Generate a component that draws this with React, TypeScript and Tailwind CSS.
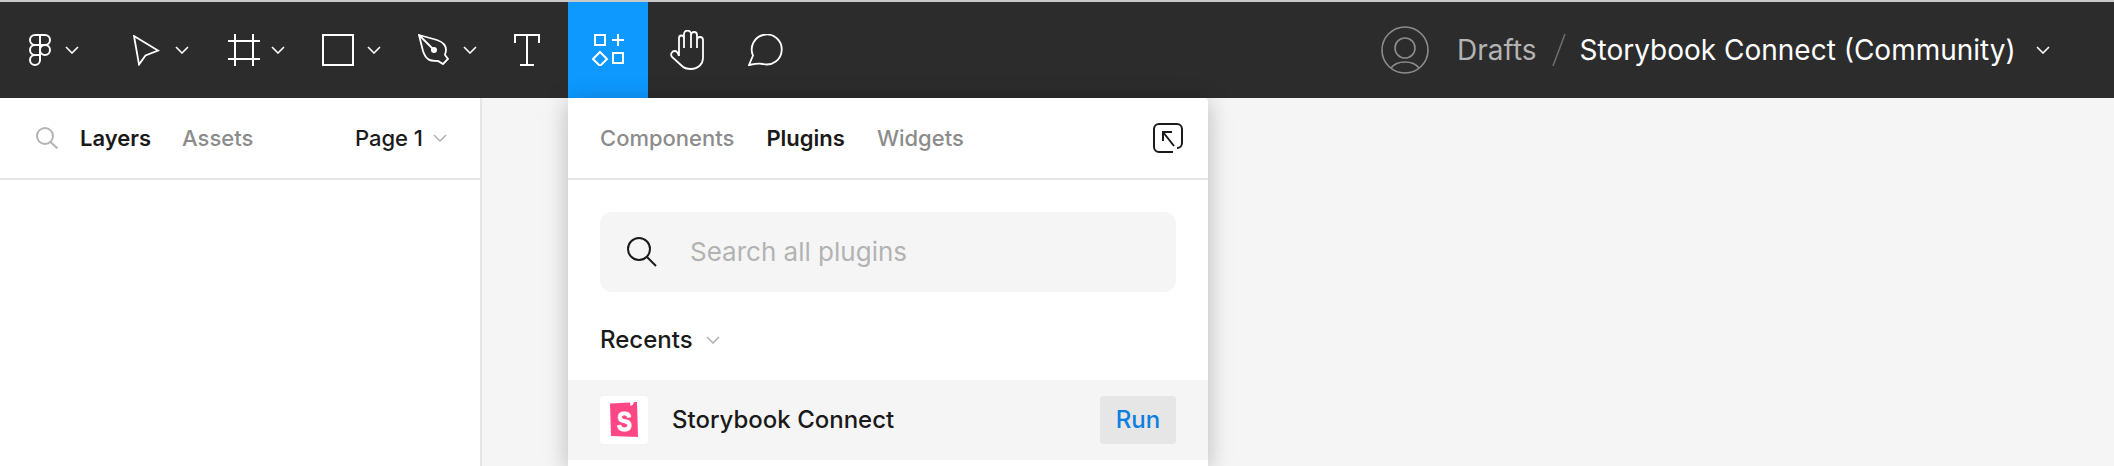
import { ReactNode } from "react";

const Chevron = ({ color = "#ffffff", className = "" }: { color?: string; className?: string }) => (
  <svg width="14" height="8" viewBox="0 0 14 8" fill="none" className={`shrink-0 ${className}`}>
    <path d="M1 1l6 6 6-6" stroke={color} strokeWidth="1.6" />
  </svg>
);

const Icon = ({ w, h, children, className = "" }: { w: number; h: number; children: ReactNode; className?: string }) => (
  <svg width={w} height={h} viewBox={`0 0 ${w} ${h}`} fill="none" stroke="#ffffff" strokeWidth="2" className={`shrink-0 ${className}`}>
    {children}
  </svg>
);

const Toolbar = () => (
  <div className="h-24 bg-[#2c2c2c] flex items-center shrink-0">
    <Icon w={22} h={32} className="ml-[29px]">
      <path d="M11 1H6a5 5 0 0 0 0 10h5zM11 1h5a5 5 0 0 1 0 10h-5zM11 11H6a5 5 0 0 0 0 10h5zM11 21H6a5 5 0 1 0 5 5zM16 11a5 5 0 1 1 0 10 5 5 0 0 1 0-10z" />
    </Icon>
    <Chevron className="ml-[14px]" />
    <Icon w={27} h={31} className="ml-[54px]">
      <path d="M1 1l24 14.500-12.500 5L6 29.500z" strokeWidth="1.8" />
    </Icon>
    <Chevron className="ml-[15px]" />
    <Icon w={32} h={32} className="ml-[39px]">
      <path d="M7 0v32M25 0v32M0 7h32M0 25h32" />
    </Icon>
    <Chevron className="ml-[11px]" />
    <Icon w={32} h={32} className="ml-[37px]">
      <rect x="1" y="1" width="30" height="30" />
    </Icon>
    <Chevron className="ml-[13px]" />
    <Icon w={32} h={32} className="ml-[37px]">
      <path d="M1 1l18 5c6 2 9 6 9 10 0 2-1 4-1 5l3 4-5 5-5-3c-4 0-8 0-10-2-3-2-4-5-5-8zM1 1l14 14" strokeWidth="1.8" />
      <circle cx="16" cy="16" r="3" fill="#ffffff" stroke="none" />
    </Icon>
    <Chevron className="ml-[13px]" />
    <Icon w={26} h={32} className="ml-[37px]">
      <path d="M1 9V1h24v8M13 1v30M6 31h14" />
    </Icon>
    <div className="ml-[28px] w-20 h-24 bg-[#0d99ff] flex items-center justify-center shrink-0">
      <Icon w={32} h={32}>
        <rect x="3" y="1" width="10" height="10" />
        <path d="M20 6h12M26 0v12" />
        <path d="M8 18l7 7-7 7-7-7z" />
        <rect x="21" y="19" width="10" height="10" />
      </Icon>
    </div>
    <Icon w={34} h={40} className="ml-[22px]">
      <path d="M9 26V8a2.500 2.500 0 0 1 5 0V4a3.500 3.500 0 0 1 7 0v1a3 3 0 0 1 6 0v5a3 3 0 0 1 6 0v18c0 6-5 11-12 11-4 0-7-1-9-3L2 27c-2-3 0-6 3-6 1.500 0 3 2 4 5M14 8v10M21 5v13M27 10v8" strokeWidth="1.8" />
    </Icon>
    <Icon w={36} h={32} className="ml-[44px]">
      <path d="M1 31l4-9.500A15 15 0 1 1 15 30c-5-1-9 0-14 1z" strokeWidth="1.8" />
    </Icon>
    <Icon w={48} h={48} className="ml-[597px]">
      <g stroke="#8c8c8c" strokeWidth="1.6">
        <circle cx="24" cy="24" r="23" />
        <circle cx="24" cy="22" r="10" />
        <path d="M10 42c3-4 8-6 14-6s11 2 14 6" />
      </g>
    </Icon>
    <span className="ml-[28px] text-[28px] text-[#b3b3b3]">Drafts</span>
    <Icon w={14} h={32} className="ml-[15px]">
      <path d="M13 0L1 32" stroke="#6e6e6e" strokeWidth="1.5" />
    </Icon>
    <span className="ml-[14px] text-[28px] text-white whitespace-nowrap">Storybook Connect (Community)</span>
    <Chevron className="ml-[20px]" />
  </div>
);

const Sidebar = () => (
  <div className="w-[482px] shrink-0 bg-white border-r-2 border-[#e6e6e6]">
    <div className="h-[82px] border-b-2 border-[#e6e6e6] flex items-center pl-[36px]">
      <svg width="23" height="22" viewBox="0 0 23 22" fill="none" stroke="#b3b3b3" strokeWidth="2" className="shrink-0">
        <circle cx="9" cy="9" r="8" />
        <path d="M14.500 15l7 6.500" />
      </svg>
      <span className="ml-[21px] text-[22px] font-semibold text-[#1a1a1a]">Layers</span>
      <span className="ml-[31px] text-[22px] font-medium text-[#8c8c8c]">Assets</span>
      <span className="ml-auto text-[22px] font-medium text-[#1a1a1a]">Page 1</span>
      <Chevron color="#b3b3b3" className="ml-[10px] mr-[33px]" />
    </div>
  </div>
);

const PluginsPanel = () => (
  <div className="ml-[86px] w-[640px] shrink-0 bg-white rounded-tr-[4px] shadow-[0_4px_24px_rgba(0,0,0,0.25)] z-10">
    <div className="h-[82px] border-b-2 border-[#e6e6e6] flex items-center pl-8 pr-[25px]">
      <span className="text-[22px] font-medium text-[#8c8c8c]">Components</span>
      <span className="ml-8 text-[22px] font-semibold text-[#1a1a1a]">Plugins</span>
      <span className="ml-8 text-[22px] font-medium text-[#8c8c8c]">Widgets</span>
      <svg width="30" height="30" viewBox="0 0 30 30" fill="none" stroke="#1a1a1a" strokeWidth="2" className="ml-auto">
        <path d="M20 29H6a5 5 0 0 1-5-5V6a5 5 0 0 1 5-5h18a5 5 0 0 1 5 5v14a5 5 0 0 1-5 5M21 23L10 9M10 18V9h9" />
      </svg>
    </div>
    <div className="px-8 pt-8">
      <div className="h-20 rounded-xl bg-[#f5f5f5] flex items-center pl-[27px]">
        <svg width="30" height="30" viewBox="0 0 30 30" fill="none" stroke="#1a1a1a" strokeWidth="2" className="shrink-0">
          <circle cx="12" cy="12" r="11" />
          <path d="M20 20l9 9" />
        </svg>
        <span className="ml-[33px] pb-[2px] text-[26px] text-[#b3b3b3]">Search all plugins</span>
      </div>
      <div className="h-[88px] pt-2 flex items-center">
        <span className="text-[24px] font-medium text-[#1a1a1a]">Recents</span>
        <Chevron color="#b3b3b3" className="ml-[13px]" />
      </div>
    </div>
    <div className="h-20 bg-[#f5f5f5] flex items-center px-8">
      <div className="w-12 h-12 rounded bg-white flex items-center justify-center">
        <svg width="28" height="36" viewBox="0 0 28 36">
          <path d="M0 1.500L20 .5l.5 3.500L23 2.500 24 0h3l1 35-27-1z" fill="#ff4785" />
          <text transform="translate(14.500 29) scale(.8 1)" textAnchor="middle" fontSize="28" fontWeight="700" fill="#ffffff" stroke="#ffffff" strokeWidth="1" fontFamily="'Liberation Sans', sans-serif">S</text>
        </svg>
      </div>
      <span className="ml-6 text-[24px] font-medium text-[#1a1a1a]">Storybook Connect</span>
      <div className="ml-auto w-[76px] h-12 rounded bg-[#e6e6e6] flex items-center justify-center text-[24px] font-medium text-[#0d7fe0]">Run</div>
    </div>
  </div>
);

export default function App() {
  return (
    <div className="w-[2114px] h-[466px] overflow-hidden flex flex-col bg-[#f5f5f5] font-['Inter',sans-serif]">
      <div className="h-[2px] bg-[#c8c8c8] shrink-0" />
      <Toolbar />
      <div className="flex flex-1 min-h-0">
        <Sidebar />
        <PluginsPanel />
      </div>
    </div>
  );
}
